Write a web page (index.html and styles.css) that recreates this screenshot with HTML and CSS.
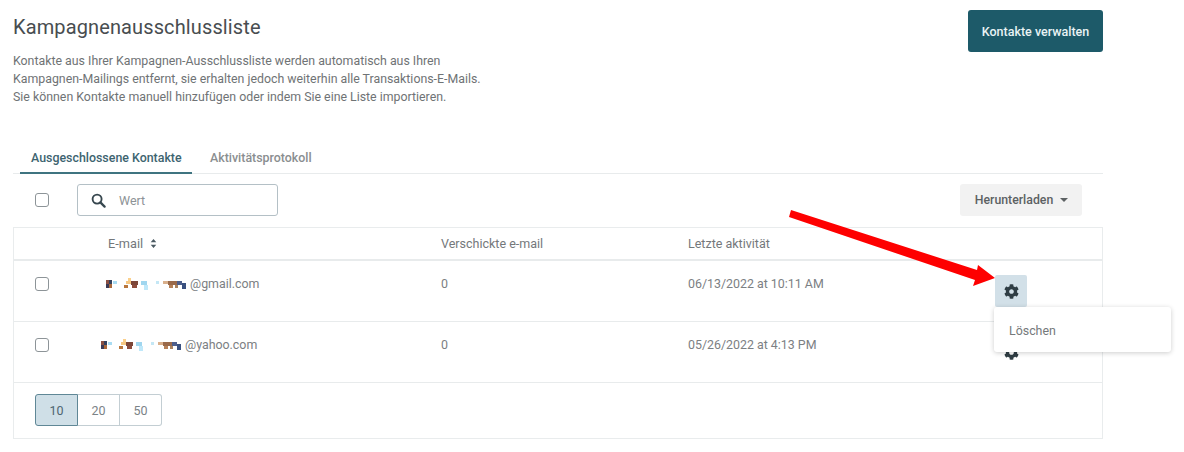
FILE: index.html
```html
<!DOCTYPE html>
<html lang="de">
<head>
<meta charset="utf-8">
<title>Kampagnenausschlussliste</title>
<link rel="stylesheet" href="styles.css">
</head>
<body>
<svg width="0" height="0" class="defs">
  <symbol id="cog" viewBox="0 0 512 512"><path d="M487.4 315.7l-42.6-24.6c4.3-23.2 4.3-47 0-70.2l42.6-24.6c4.9-2.8 7.1-8.6 5.5-14-11.1-35.6-30-67.8-54.7-94.6-3.8-4.1-10-5.1-14.8-2.3L380.8 110c-17.9-15.4-38.5-27.3-60.8-35.1V25.8c0-5.6-3.9-10.5-9.4-11.7-36.7-8.2-74.3-7.8-109.2 0-5.5 1.2-9.4 6.1-9.4 11.7V75c-22.2 7.9-42.8 19.8-60.8 35.1L88.7 85.5c-4.9-2.8-11-1.9-14.8 2.3-24.7 26.7-43.6 58.9-54.7 94.6-1.7 5.4.6 11.2 5.5 14L67.3 221c-4.3 23.2-4.3 47 0 70.2l-42.6 24.6c-4.9 2.8-7.1 8.6-5.5 14 11.1 35.6 30 67.8 54.7 94.6 3.8 4.1 10 5.1 14.8 2.3l42.6-24.6c17.9 15.4 38.5 27.3 60.8 35.1v49.2c0 5.6 3.9 10.5 9.4 11.7 36.7 8.2 74.3 7.8 109.2 0 5.5-1.2 9.4-6.1 9.4-11.7v-49.2c22.2-7.9 42.8-19.8 60.8-35.1l42.6 24.6c4.9 2.8 11 1.9 14.8-2.3 24.7-26.7 43.6-58.9 54.7-94.6 1.5-5.5-.7-11.3-5.6-14.1zM256 336c-44.1 0-80-35.9-80-80s35.9-80 80-80 80 35.9 80 80-35.9 80-80 80z"/></symbol>
  <symbol id="mask" viewBox="0 0 84 12">
    <rect x="0" y="2" width="3" height="4" fill="#8a4f42"/><rect x="3" y="2" width="3" height="4" fill="#33415e"/>
    <rect x="0" y="6" width="3" height="4" fill="#3b3a55"/><rect x="3" y="6" width="3" height="4" fill="#a9683c"/>
    <rect x="7" y="3" width="4" height="3" fill="#a9dcf3"/>
    <rect x="22" y="0" width="3" height="4" fill="#fbd08c"/><rect x="20" y="3" width="5" height="3" fill="#f6c883"/>
    <rect x="18" y="7" width="4" height="3" fill="#b9763c"/><rect x="25" y="3" width="7" height="4" fill="#7c4638"/>
    <rect x="26" y="7" width="5" height="3" fill="#8e4c3c"/>
    <rect x="35" y="3" width="6" height="4" fill="#a0d6ef"/><rect x="38" y="7" width="4" height="5" fill="#bfe8fa"/>
    <rect x="50" y="3" width="3" height="3" fill="#c4e7f5"/>
    <rect x="57" y="3" width="5" height="3" fill="#d9b08c"/><rect x="62" y="3" width="9" height="4" fill="#9a6a4a"/>
    <rect x="63" y="7" width="4" height="3" fill="#b78158"/><rect x="71" y="3" width="5" height="4" fill="#4d5f8c"/>
    <rect x="69" y="7" width="3" height="3" fill="#a9835f"/><rect x="76" y="5" width="4" height="6" fill="#39507f"/>
  </symbol>
</svg>

<main class="page">
  <header class="head">
    <div class="intro">
      <h1 class="title">Kampagnenausschlussliste</h1>
      <p class="desc">Kontakte aus Ihrer Kampagnen-Ausschlussliste werden automatisch aus Ihren<br>Kampagnen-Mailings entfernt, sie erhalten jedoch weiterhin alle Transaktions-E-Mails.<br>Sie können Kontakte manuell hinzufügen oder indem Sie eine Liste importieren.</p>
    </div>
    <button class="btn-primary">Kontakte verwalten</button>
  </header>

  <nav class="tabs">
    <a class="tab tab-active">Ausgeschlossene Kontakte</a>
    <a class="tab">Aktivitätsprotokoll</a>
  </nav>

  <div class="toolbar">
    <span class="check"></span>
    <div class="search">
      <svg class="search-icon" viewBox="0 0 16 16"><circle cx="6.5" cy="6.5" r="4.8" fill="none" stroke="#37474f" stroke-width="2"/><path d="M10 10l4.5 4.5" stroke="#37474f" stroke-width="2.4" stroke-linecap="round"/></svg>
      <span class="placeholder">Wert</span>
    </div>
    <button class="btn-download">Herunterladen<span class="caret"></span></button>
  </div>

  <section class="table">
    <div class="row row-head">
      <span></span>
      <span class="email-head">E-mail
        <svg class="sort" viewBox="0 0 8 11"><path d="M4 0l3.4 4H.6zM4 11L.6 7h6.8z" fill="#4a5a62"/></svg>
      </span>
      <span>Verschickte e-mail</span>
      <span>Letzte aktivität</span>
    </div>

    <div class="row row-body">
      <span class="check check-cell"></span>
      <span class="email email-a"><svg class="mask"><use href="#mask"/></svg>@gmail.com</span>
      <span>0</span>
      <span>06/13/2022 at 10:11 AM</span>
      <div class="action">
        <button class="gear gear-open"><svg class="cog"><use href="#cog"/></svg></button>
        <div class="menu">Löschen</div>
      </div>
    </div>

    <div class="row row-body">
      <span class="check check-cell"></span>
      <span class="email email-b"><svg class="mask"><use href="#mask"/></svg>@yahoo.com</span>
      <span>0</span>
      <span>05/26/2022 at 4:13 PM</span>
      <div class="action">
        <button class="gear"><svg class="cog"><use href="#cog"/></svg></button>
      </div>
    </div>

    <div class="pager-row">
      <div class="pager">
        <button class="page-btn page-on">10</button>
        <button class="page-btn">20</button>
        <button class="page-btn">50</button>
      </div>
    </div>
  </section>

  <svg class="arrow" viewBox="0 0 1184 452"><path d="M791 210L977 270L978 265L995 278L973 286L975 280L789 217Z" fill="#fe0000"/></svg>
</main>
</body>
</html>
```

FILE: styles.css
```css
* { box-sizing: border-box; }
html, body { margin: 0; padding: 0; background: #fff; }
body { font-family: Roboto, "Liberation Sans", sans-serif; color: #6b6f72; height: 452px; overflow: hidden; }
.defs { position: absolute; }
.page { position: relative; width: 1090px; margin-left: 13px; }

.head { display: flex; justify-content: space-between; align-items: flex-start; padding-top: 10px; height: 144px; }
.title { margin: 5px 0 0; font-size: 20px; line-height: 24px; font-weight: 400; color: #484d50; letter-spacing: .12px; }
.desc { margin: 13px 0 0; font-size: 12.35px; line-height: 18px; color: #6f7375; }
.btn-primary { width: 135px; height: 42px; border: 0; border-radius: 3px; background: #1d5a69; color: #e9f3f5; font: 500 12.5px Roboto, sans-serif; padding: 0; }

.tabs { display: flex; padding-left: 7px; border-bottom: 1px solid #e8ebec; height: 30px; }
.tab { font-size: 12.4px; font-weight: 500; line-height: 20px; padding: 4px 11px 0; color: #8a8e90; white-space: nowrap; }
.tab:first-child { width: 172px; color: #3d6470; border-bottom: 2px solid #3f7480; height: 30px; margin-right: 7px; }

.toolbar { display: flex; align-items: center; height: 53px; padding: 0 21px 1px 22px; }
.check { display: block; width: 14px; height: 14px; border: 1px solid #8d9498; border-radius: 3px; background: #fff; flex: none; }
.search { display: flex; align-items: center; width: 201px; height: 32px; margin-left: 28px; padding-left: 13px; border: 1px solid #b4c0c6; border-radius: 3px; }
.search-icon { width: 15px; height: 15px; }
.placeholder { font-size: 12.5px; color: #8d9396; margin-left: 13px; }
.btn-download { margin-left: auto; width: 122px; height: 32px; border: 0; border-radius: 3px; background: #f2f2f2; color: #5c6163; font: 500 12.3px Roboto, sans-serif; padding: 0 0 0 1px; }
.caret { display: inline-block; margin-left: 7px; vertical-align: 2px; border: 4px solid transparent; border-top-color: #5c6163; border-bottom: 0; }

.table { border: 1px solid #e9eced; height: 212px; font-size: 12.5px; }
.row { display: grid; grid-template-columns: 94px 333px 247px 307px 1fr; }
.row-head { height: 33px; align-items: center; border-bottom: 2px solid #e8ebec; color: #74787b; }
.row-body { height: 61px; border-bottom: 1px solid #e8ebec; padding-top: 14px; line-height: 18px; font-size: 12.4px; color: #7c8083; }
.email-head { display: flex; align-items: center; gap: 7px; font-size: 12.75px; }
.sort { width: 7px; height: 9px; }
.check-cell { margin: 2px 0 0 21px; }
.email { display: flex; align-items: center; height: 18px; white-space: nowrap; }
.email-a { margin-left: -2px; }
.email-b { margin-left: -7px; }
.mask { width: 84px; height: 12px; flex: none; filter: blur(.4px); }
.action { position: relative; }
.gear { display: flex; align-items: center; justify-content: center; width: 32px; height: 32px; padding: 0; border: 0; border-radius: 2px; background: transparent; }
.gear-open { background: #d2e0e8; }
.cog { width: 15px; height: 15px; fill: #2f3d44; }
.menu { position: absolute; left: -1px; top: 32px; width: 177px; height: 45px; padding: 16px 0 0 15px; background: #fff; border-radius: 3px; box-shadow: 0 1px 5px rgba(0,0,0,.2); font-size: 12.4px; line-height: 16px; color: #75797b; z-index: 2; }

.pager-row { padding: 11px 0 0 21px; }
.pager { display: flex; width: 127px; height: 32px; }
.page-btn { flex: 1; border: 1px solid #c3ced3; border-left: 0; background: #fff; color: #7b8387; font: 400 12.5px Roboto, sans-serif; padding: 0; }
.page-btn:first-child { border: 1px solid #5f8796; border-radius: 3px 0 0 3px; }
.page-btn:last-child { border-radius: 0 3px 3px 0; }
.page-on { background: #cfdfe7; color: #4d6671; }

.arrow { position: absolute; left: -13px; top: 0; width: 1184px; height: 452px; z-index: 3; pointer-events: none; }
```
